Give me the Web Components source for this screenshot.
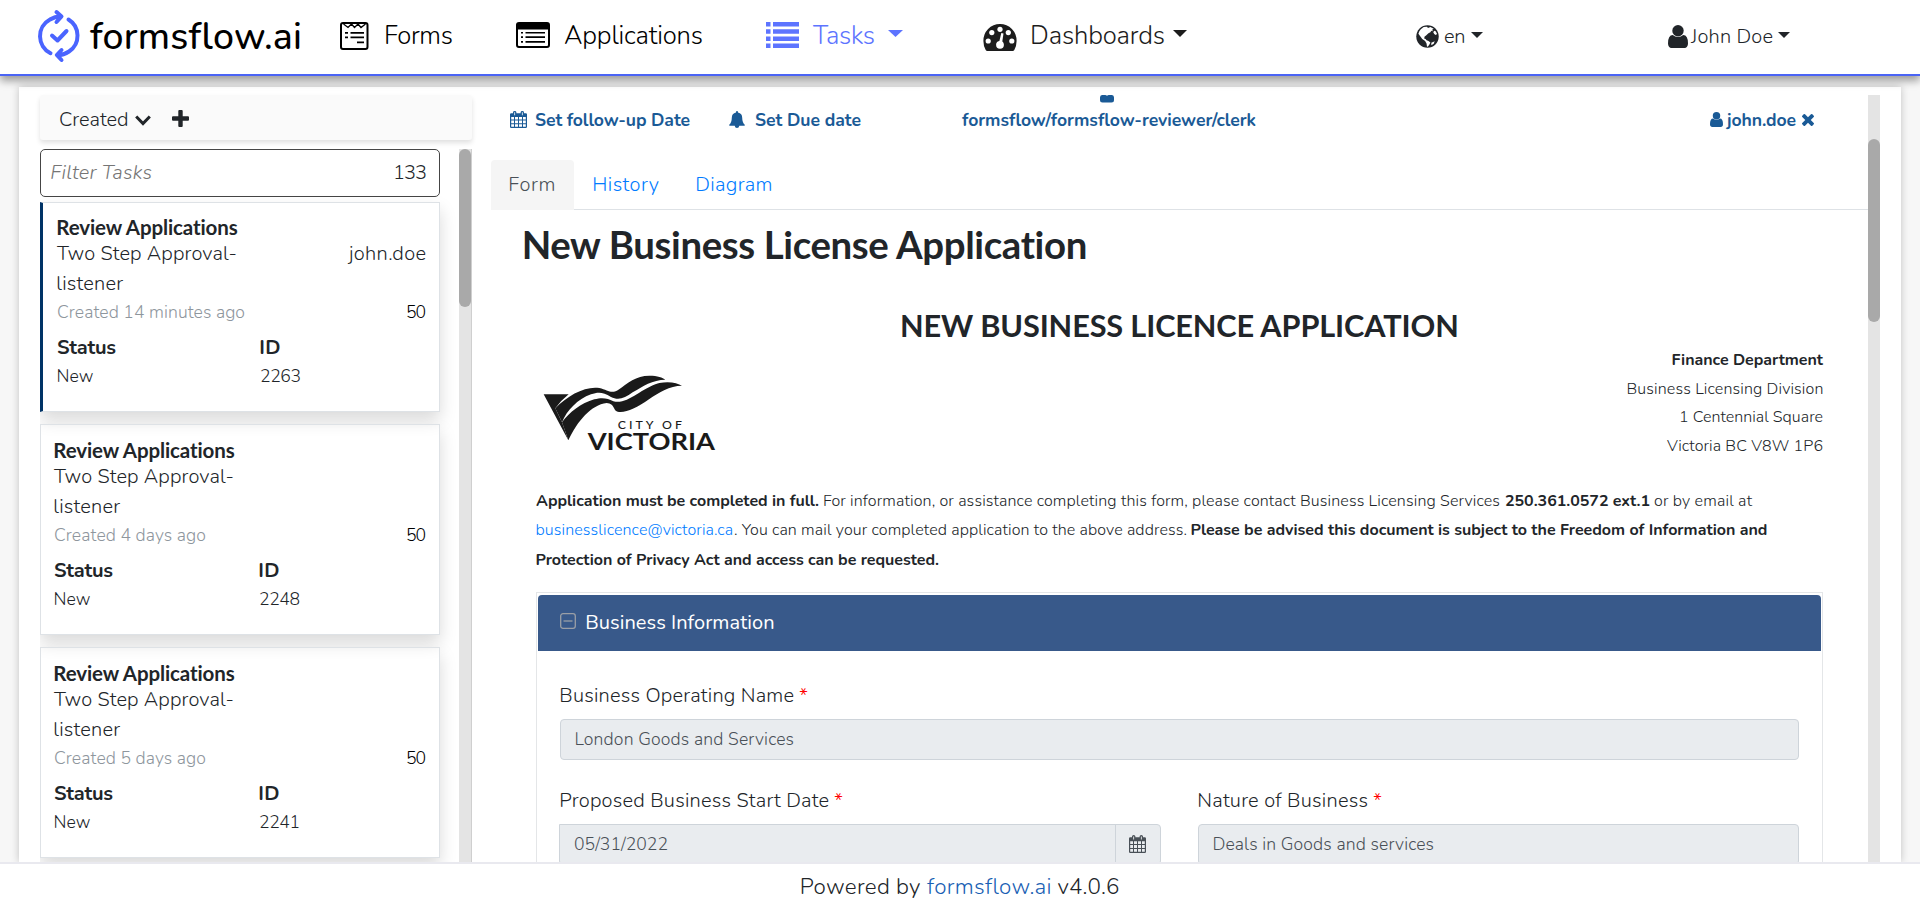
<!DOCTYPE html>
<html lang="en">
<head>
<meta charset="utf-8">
<title>formsflow.ai</title>
<style>
  html, body { margin: 0; height: 100%; overflow: hidden; }
  body { background: #f7f7f7; color: #212529; font-family: Nunito, Lato, "Open Sans", sans-serif; font-weight: 350; }
</style>
</head>
<body>
<ff-app></ff-app>
<script>
const define = (name, html, setup) => {
  const tpl = document.createElement('template');
  tpl.innerHTML = html.trim();
  customElements.define(name, class extends HTMLElement {
    connectedCallback() {
      if (this.shadowRoot) return;
      const root = this.attachShadow({ mode: 'open' });
      root.appendChild(tpl.content.cloneNode(true));
      if (setup) setup(this, root);
    }
  });
};

/* Single line of text whose ink spans a given width (w, in px); side bearings hang outside the box. */
define('ff-fit', `<style>:host { display: inline-block; white-space: nowrap; flex: none; vertical-align: top; } span { display: inline-block; white-space: pre; }</style><span><slot></slot></span>`, (el, root) => {
  const w = +el.getAttribute('w');
  const span = root.querySelector('span');
  const text = el.textContent;
  const size = parseFloat(getComputedStyle(el).fontSize);
  const first = text[0], last = text[text.length - 1];
  const lead = size * (/[BDEFHIKLMNPRbhiklmnpr]/.test(first) ? .035 : 0);
  const tail = size * (/[BDHIMNdhilmn]/.test(last) ? .025 : 0);
  el.style.width = w + 'px';
  span.style.marginLeft = -lead + 'px';
  span.style.letterSpacing = ((w + lead + tail - span.getBoundingClientRect().width) / (text.length - 1)) + 'px';
});

const ICONS = {
  logo: ['0 0 42 52', '<g fill="none" stroke="#4a64ff" stroke-width="4" stroke-linecap="round" stroke-linejoin="round"><path d="M12.5 43.2A19 19 0 0 1 12 9.5Q17 6.3 23 6.4M18.500 2L23.500 6.500L18.500 12M30.500 9.500A19 19 0 0 1 31 41.500Q25.500 45.300 19.500 45.200M23.500 40L18.800 45L23.500 50M14 25.500L19.500 30.500L28.500 21"/></g>'],
  form: ['0 0 29 28', '<rect x="1" y="1" width="26.500" height="26" rx="2" fill="none" stroke="currentColor" stroke-width="2"/><path d="M3.500 2l4.500 3.500L11.500 2l3 3.500L18 2l3 3.500L25.500 2" fill="none" stroke="currentColor" stroke-width="1.300"/><path d="M5 10h3v1.800H5zM10.500 10H24v1.800H10.500zM5 14.500h3v1.800H5zM10.500 14.500H24v1.800H10.500zM17 19.500h7v1.800h-7z" fill="currentColor"/>'],
  apps: ['0 0 34 26', '<path fill="currentColor" fill-rule="evenodd" d="M3 0h28a3 3 0 0 1 3 3v20a3 3 0 0 1-3 3H3a3 3 0 0 1-3-3V3a3 3 0 0 1 3-3zM2 7.500V23a1 1 0 0 0 1 1h28a1 1 0 0 0 1-1V7.500zM5 10h2v1.600H5zM9.500 10H29v1.600H9.500zM5 14.200h2v1.800H5zM9.500 14.200H29V16H9.500zM5 19h2v1.800H5zM9.500 19H29v1.800H9.500z"/>'],
  list: ['0 0 33 26', '<path fill="currentColor" d="M0 0h4.500v4.500H0zM7 0h26v4.500H7zM0 7.200h4.500v4.500H0zM7 7.200h26v4.500H7zM0 14.400h4.500v4.500H0zM7 14.400h26v4.500H7zM0 21.500h4.500V26H0zM7 21.500h26V26H7z"/>'],
  gauge: ['0 0 34 27', '<path fill="currentColor" d="M17 0a16.500 16.500 0 0 1 16.600 17q0 5-2.300 9-.6 1-1.600 1H4.300q-1 0-1.600-1Q.4 22 .4 17A16.500 16.500 0 0 1 17 0z"/><g fill="#fff"><circle cx="17" cy="5.300" r="2.600"/><circle cx="8.800" cy="8.600" r="2.600"/><circle cx="25.300" cy="8.600" r="2.600"/><circle cx="5.200" cy="17" r="2.600"/><circle cx="28.800" cy="17" r="2.600"/><circle cx="17" cy="20.800" r="3.900"/><path d="M15.700 20L18.300 9l2.200.4L18.900 20z"/></g>'],
  globe: ['0 0 24 24', '<circle cx="12" cy="12" r="11.700" fill="currentColor"/><path fill="#fff" d="M5 4.500L8 2.200l3.500-.4 1 1.200 2.500-.8 3.500 1.600-1.500 1 .5 1.700-1.500-.5-1 1.500-2 1-2.500 2.500-1.500 1-.5 2 1.500.5 1 1.500 2 .7 2 1.600-1 2-1.500 2.200-1 .2-.5-3.500-1.500-2.500L6.500 14.500 5 12.500 2.500 9l1-2.500zM19 6l1.500.5 1.500 3-1.500 1-1.500-1.200-1-1.800zM16 18.500l3.500-1.500-1 2.500-2.500 1.500z"/>'],
  user: ['0 0 20 23', '<path fill="currentColor" d="M20 18.600q0 2-1 3.200T16.600 23H3.400Q2 23 1 21.800T0 18.600q0-8.400 4.800-8.500Q7 12 10 12t5.200-1.900q4.800.1 4.800 8.500z"/><circle cx="10" cy="5.700" r="5.700" fill="currentColor"/>'],
  caret: ['0 0 14 7', '<path fill="currentColor" d="M0 0h14L7 7z"/>'],
  chevron: ['0 0 16 11', '<path fill="none" stroke="currentColor" stroke-width="3" d="M1.200 1.500L8 8.500l6.800-7"/>'],
  plus: ['0 0 17 17', '<path fill="currentColor" d="M6.300 1q0-1 1-1h2.400q1 0 1 1v5.300H16q1 0 1 1v2.400q0 1-1 1h-5.300V16q0 1-1 1H7.300q-1 0-1-1v-5.300H1q-1 0-1-1V7.300q0-1 1-1h5.300z"/>'],
  calendar: ['0 0 17 18', '<path fill="currentColor" fill-rule="evenodd" d="M1.300 2.300H3V1.500Q3 0 4.700 0t1.700 1.500v.8h4.200v-.8Q10.600 0 12.300 0T14 1.500v.8h1.700Q17 2.300 17 3.500v13.200q0 1.300-1.300 1.300H1.300Q0 18 0 16.700V3.500q0-1.200 1.300-1.200zM1.200 6.300V9H4V6.300zM5 6.300V9h3V6.300zM9 6.300V9h3V6.300zM13 6.300V9h2.800V6.300zM1.200 10v3H4v-3zM5 10v3h3v-3zM9 10v3h3v-3zM13 10v3h2.800v-3zM1.200 14v2.800H4V14zM5 14v2.800h3V14zM9 14v2.800h3V14zM13 14v2.800h2.800V14z"/><path d="M4.300 1.400h.8v3h-.8zM11.900 1.400h.8v3h-.8z" fill="#fff"/>'],
  bell: ['0 0 16 17', '<path fill="currentColor" d="M8 0q1 0 1 1v.6q4.200.8 4.200 5.200 0 5 2.800 7.200 0 .8-1 .8h-4.700Q10 17 8 17t-2.300-2.200H1q-1 0-1-.8 2.800-2.200 2.800-7.200 0-4.400 4.200-5.200V1q0-1 1-1z"/>'],
  times: ['302 366 1188 1188', '<path fill="currentColor" d="M1490 1322q0 40-28 68l-136 136q-28 28-68 28t-68-28l-294-294-294 294q-28 28-68 28t-68-28l-136-136q-28-28-28-68t28-68l294-294-294-294q-28-28-28-68t28-68l136-136q28-28 68-28t68 28l294 294 294-294q28-28 68-28t68 28l136 136q28 28 28 68t-28 68l-294 294 294 294q28 28 28 68z"/>'],
  group: ['0 0 14 8', '<path fill="currentColor" d="M0 2.500Q0 0 2 0h3.500q1.500 1 3 0H12q2 0 2 2.500V5q0 2.500-2.500 2.500h-9Q0 7.500 0 5z"/>'],
  minus: ['0 0 16 16', '<rect x=".7" y=".7" width="14.600" height="14.600" rx="2.300" fill="none" stroke="currentColor" stroke-width="1.300"/><path d="M3.500 8h9" stroke="currentColor" stroke-width="1.300"/>'],
  victoria: ['0 0 570 270', `<g fill="#1a1a1a"><path d="M23 76H98Q75 94 58 118L78 160L97 214z"/><path d="M58 118C95 78 150 50 190 57C215 63 225 75 245 64C275 42 300 20 340 20C365 20 380 25 388 32C350 32 320 52 290 70C265 90 245 94 225 84C200 68 185 70 165 76C125 90 92 125 78 160z"/><path d="M78 160C100 130 135 102 175 91C200 84 215 88 232 97C275 108 310 60 370 42C400 36 425 42 438 50C400 50 370 70 340 90C300 118 270 132 245 128C230 124 238 105 212 102C165 108 125 155 97 214z"/>
    <text x="245" y="180" font-family="Lato" font-weight="500" font-size="37" textLength="193">CITY OF</text><text x="155" y="243" font-family="Lato" font-weight="700" font-size="68" textLength="382" lengthAdjust="spacingAndGlyphs">VICTORIA</text></g>`],
};
define('ff-icon', `<style>:host { display: block; flex: none; } svg { display: block; width: 100%; height: 100%; overflow: visible; }</style><svg preserveAspectRatio="none"></svg>`, (el, root) => {
  const [box, body] = ICONS[el.getAttribute('name')];
  const svg = root.querySelector('svg');
  svg.setAttribute('viewBox', box);
  svg.innerHTML = body;
  el.style.width = el.getAttribute('w') + 'px';
  el.style.height = el.getAttribute('h') + 'px';
});

define('ff-navbar', `
  <style>
    :host { display: flex; align-items: flex-start; box-sizing: border-box; height: 76px; padding-left: 38px; background: #fff;
      border-bottom: 2px solid #4a64f5; box-shadow: 0 5px 8px rgba(0,0,0,.36); position: relative; z-index: 1;
      font-size: 25.600px; line-height: 30px; color: #000; }
    .item { display: flex; align-items: flex-start; }
    .brand { font-size: 37.500px; line-height: 40px; font-weight: 540; }
    .small { font-size: 20px; color: #212529; }
  </style>
  <div class="item"><ff-icon name="logo" w="42" h="52" style="margin-top:10px"></ff-icon><ff-fit class="brand" w="211" style="margin:17px 0 0 10px">formsflow.ai</ff-fit></div>
  <div class="item" style="margin-left:39px"><ff-icon name="form" w="29" h="28" style="margin-top:22px"></ff-icon><ff-fit w="68" style="margin:21px 0 0 16px">Forms</ff-fit></div>
  <div class="item" style="margin-left:63px"><ff-icon name="apps" w="34" h="26" style="margin-top:22px"></ff-icon><ff-fit w="139" style="margin:21px 0 0 14px">Applications</ff-fit></div>
  <div class="item" style="margin-left:63px;color:#5d74ff"><ff-icon name="list" w="33" h="26" style="margin-top:22px"></ff-icon><ff-fit w="62" style="margin:21px 0 0 14px">Tasks</ff-fit><ff-icon name="caret" w="15" h="7" style="margin:30px 0 0 13px"></ff-icon></div>
  <div class="item" style="margin-left:80px;color:#1c1c1c"><ff-icon name="gauge" w="34" h="27" style="margin-top:24px"></ff-icon><ff-fit w="134" style="margin:21px 0 0 14px">Dashboards</ff-fit><ff-icon name="caret" w="14" h="7" style="margin:30px 0 0 8px"></ff-icon></div>
  <div class="item small" style="margin-left:229px"><ff-icon name="globe" w="23" h="23" style="margin-top:25px"></ff-icon><ff-fit w="21" style="margin:22px 0 0 5px">en</ff-fit><ff-icon name="caret" w="12" h="6" style="margin:32px 0 0 6px"></ff-icon></div>
  <div class="item small" style="margin-left:185px"><ff-icon name="user" w="20" h="23" style="margin-top:25px"></ff-icon><ff-fit w="82" style="margin:22px 0 0 3px">John Doe</ff-fit><ff-icon name="caret" w="12" h="6" style="margin:32px 0 0 5px"></ff-icon></div>`);

define('ff-task-card', `
  <style>
    :host { display: block; box-sizing: border-box; width: 400px; height: 211px; margin-bottom: 12px; padding: 13px 13px 0 13px;
      border: 1px solid #dee2e6; box-shadow: 0 8px 16px rgba(0,0,0,.15); font-size: 20px; }
    :host([selected]) { border-left: 3px solid #036; height: 210px; padding-top: 12px; padding-left: 14px; }
    .title { font-family: Lato, sans-serif; font-size: 20.500px; font-weight: 700; line-height: 24px; height: 24px; }
    .row { display: flex; justify-content: space-between; }
    .proc { line-height: 30px; height: 59px; }
    .meta { line-height: 28px; font-size: 17.600px; color: #000; }
    .meta .age { color: #8e969d; }
    .grid { display: grid; grid-template-columns: 205px 1fr; line-height: 28px; font-size: 17.600px; margin-top: 8px; }
    :host([selected]) .grid { grid-template-columns: 203px 1fr; }
    b { font-size: 20px; font-weight: 700; }
  </style>
  <div class="title"><ff-fit w="181">Review Applications</ff-fit></div>
  <div class="row proc"><div><ff-fit w="180">Two Step Approval-</ff-fit><br><ff-fit w="66">listener</ff-fit></div><div class="who"></div></div>
  <div class="row meta"><span class="age"></span><ff-fit w="20">50</ff-fit></div>
  <div class="grid"><b><ff-fit w="59">Status</ff-fit></b><b><ff-fit w="20">ID</ff-fit></b><ff-fit w="36.500">New</ff-fit><span class="id"></span></div>`, (el, root) => {
  const put = (sel, text, w) => { root.querySelector(sel).innerHTML = `<ff-fit w="${w}">${text}</ff-fit>`; };
  if (el.getAttribute('assignee')) put('.who', el.getAttribute('assignee'), 77);
  put('.age', el.getAttribute('age'), el.getAttribute('age-w'));
  put('.id', el.getAttribute('task-id'), 41);
});

define('ff-task-list', `
  <style>
    :host { display: flex; flex-direction: column; width: 432px; padding-top: 8px; font-size: 20px; }
    .head { display: flex; align-items: flex-start; height: 45px; background: #fafafa; border-radius: 3px; box-shadow: 0 3px 5px rgba(0,0,0,.12); padding-left: 19px; line-height: 28px; flex: none; }
    .body { display: flex; margin-top: 9px; flex: 1; min-height: 0; overflow: hidden; }
    .cards { width: 419px; overflow: hidden; }
    .filter { display: flex; justify-content: space-between; box-sizing: border-box; width: 400px; height: 48px; border: 1px solid #454545; border-radius: 5px; padding: 0 12px 0 10px; line-height: 45px; margin-bottom: 5px; }
    i { color: #757575; }
    .bar { width: 12px; background: #e4e4e4; border-right: 1px solid #cfcfcf; }
    .thumb { height: 158px; border-radius: 6px; background: #a9a9a9; }
  </style>
  <div class="head"><ff-fit w="69" style="margin-top:11px">Created</ff-fit><ff-icon name="chevron" w="16" h="11" style="margin:20px 0 0 7px"></ff-icon><ff-icon name="plus" w="17" h="17" style="margin:15px 0 0 21px"></ff-icon></div>
  <div class="body">
    <div class="cards">
      <div class="filter"><i><ff-fit w="101">Filter Tasks</ff-fit></i><ff-fit w="34">133</ff-fit></div>
      <ff-task-card selected assignee="john.doe" age="Created 14 minutes ago" age-w="188" task-id="2263"></ff-task-card>
      <ff-task-card age="Created 4 days ago" age-w="152" task-id="2248"></ff-task-card>
      <ff-task-card age="Created 5 days ago" age-w="152" task-id="2241"></ff-task-card>
    </div>
    <div class="bar"><div class="thumb"></div></div>
  </div>`);

define('ff-label', `
  <style>:host { display: flex; line-height: 29px; height: 28px; font-size: 20px; margin-bottom: 10px; } em { color: #f00; font-style: normal; margin-left: 5px; }</style>
  <slot></slot><em>*</em>`);

define('ff-input', `
  <style>
    :host { display: flex; box-sizing: border-box; height: 41px; border: 1px solid #ced4da; border-radius: 4px; background: #e9ecef; color: #495057; font-size: 17.600px; line-height: 39px; padding-left: 14px; }
    .pad { flex: 1; }
    .addon { display: none; width: 44px; border-left: 1px solid #ced4da; }
    :host([date]) { border-top-left-radius: 0; }
    :host([date]) .addon { display: block; }
  </style>
  <slot></slot><div class="pad"></div><div class="addon"><ff-icon name="calendar" w="17" h="18" style="margin:10px 0 0 13px"></ff-icon></div>`);

define('ff-panel', `
  <style>
    :host { display: block; border: 1px solid #e4e6e8; padding: 2px 1px 0; height: 400px; }
    .head { display: flex; align-items: flex-start; height: 56px; background: #38598a; border-radius: 4px 4px 0 0; color: #fff; font-size: 20px; font-weight: 450; line-height: 55px; padding-left: 22px; }
    .body { padding: 30px 22px 0; }
  </style>
  <div class="head"><ff-icon name="minus" w="16" h="16" style="margin-top:18px;color:#9a9fa6"></ff-icon><ff-fit w="188" style="margin-left:10px">Business Information</ff-fit></div>
  <div class="body"><slot></slot></div>`);

define('ff-task-detail', `
  <style>
    :host { display: flex; width: 1389px; padding-top: 8px; }
    .main { width: 1377px; overflow: hidden; }
    .bar { width: 12px; background: #e4e4e4; padding-top: 44px; box-sizing: border-box; }
    .thumb { height: 183px; border-radius: 6px; background: #a9a9a9; }
    .tools { display: flex; align-items: flex-start; height: 65px; color: #1a5a96; font-size: 17.600px; font-weight: 700; line-height: 24px; padding-left: 19px; }
    .tools > ff-fit { margin-top: 13px; }
    .groups { display: flex; flex-direction: column; align-items: center; width: 294px; margin-left: 101px; }
    .tabs { display: flex; height: 49px; border-bottom: 1px solid #dee2e6; color: #007bff; font-size: 20px; line-height: 49px; }
    .tabs .on { width: 65px; height: 50px; padding-left: 18px; background: #f5f5f5; color: #495057; border-radius: 4px 4px 0 0; }
    h1 { margin: 11px 0 0 32px; font-size: 38.400px; line-height: 46px; font-weight: 700; font-family: Lato, sans-serif; }
    h2 { margin: 41px 0 0 410px; font-size: 30.700px; line-height: 36px; font-weight: 700; font-family: Lato, sans-serif; }
    .top { display: flex; justify-content: space-between; margin: 2px 45px 0; height: 115px; font-size: 16px; line-height: 28.700px; }
    .addr { display: flex; flex-direction: column; align-items: flex-end; }
    .text { margin: 26px 0 0 45px; font-size: 16px; line-height: 29.400px; height: 88px; }
    .text div { display: flex; }
    .text a { color: #007bff; }
    b { font-weight: 700; }
    ff-panel { margin: 17px 45px 0; }
    .cols { display: grid; grid-template-columns: 602px 601px; column-gap: 36px; margin: 26px 0 0 -1px; }
    .cols > div:first-child ff-label { margin-left: 1px; }
    .cols > div:last-child { margin-left: 1px; margin-right: -1px; }
  </style>
  <div class="main">
    <div class="tools">
      <ff-icon name="calendar" w="17" h="17" style="margin-top:16px"></ff-icon><ff-fit w="155" style="margin-left:8px">Set follow-up Date</ff-fit>
      <ff-icon name="bell" w="16" h="17" style="margin:16px 0 0 39px"></ff-icon><ff-fit w="106" style="margin-left:10px">Set Due date</ff-fit>
      <div class="groups"><ff-icon name="group" w="14" h="8" style="margin-right:4px"></ff-icon><ff-fit w="294" style="margin-top:5px">formsflow/formsflow-reviewer/clerk</ff-fit></div>
      <ff-icon name="user" w="13" h="15" style="margin:17px 0 0 454px"></ff-icon><ff-fit w="69" style="margin-left:4px">john.doe</ff-fit><ff-icon name="times" w="12" h="12" style="margin:19px 0 0 6px"></ff-icon>
    </div>
    <div class="tabs"><div class="on"><ff-fit w="46">Form</ff-fit></div><ff-fit w="66" style="margin-left:19px">History</ff-fit><ff-fit w="76" style="margin-left:37px">Diagram</ff-fit></div>
    <h1><ff-fit w="564">New Business License Application</ff-fit></h1>
    <h2><ff-fit w="557">NEW BUSINESS LICENCE APPLICATION</ff-fit></h2>
    <div class="top">
      <ff-icon name="victoria" w="190" h="90" style="margin-top:23px"></ff-icon>
      <div class="addr"><b><ff-fit w="151">Finance Department</ff-fit></b><ff-fit w="196">Business Licensing Division</ff-fit><ff-fit w="144">1 Centennial Square</ff-fit><ff-fit w="156">Victoria BC V8W 1P6</ff-fit></div>
    </div>
    <div class="text">
      <div><b><ff-fit w="283">Application must be completed in full.</ff-fit></b><ff-fit w="676.500" style="margin-left:4.500px">For information, or assistance completing this form, please contact Business Licensing Services</ff-fit><b><ff-fit w="145" style="margin-left:5px">250.361.0572 ext.1</ff-fit></b><ff-fit w="98" style="margin-left:4px">or by email at</ff-fit></div>
      <div><a><ff-fit w="197">businesslicence@victoria.ca</ff-fit></a><ff-fit w="453" style="margin-left:1px">. You can mail your completed application to the above address.</ff-fit><b><ff-fit w="576" style="margin-left:4px">Please be advised this document is subject to the Freedom of Information and</ff-fit></b></div>
      <div><b><ff-fit w="403">Protection of Privacy Act and access can be requested.</ff-fit></b></div>
    </div>
    <ff-panel>
      <ff-label><ff-fit w="234">Business Operating Name</ff-fit></ff-label>
      <ff-input><ff-fit w="219">London Goods and Services</ff-fit></ff-input>
      <div class="cols">
        <div><ff-label><ff-fit w="269">Proposed Business Start Date</ff-fit></ff-label><ff-input date><ff-fit w="94">05/31/2022</ff-fit></ff-input></div>
        <div><ff-label><ff-fit w="170">Nature of Business</ff-fit></ff-label><ff-input><ff-fit w="221">Deals in Goods and services</ff-fit></ff-input></div>
      </div>
    </ff-panel>
  </div>
  <div class="bar"><div class="thumb"></div></div>`);

define('ff-footer', `
  <style>
    :host { display: flex; justify-content: center; align-items: flex-start; box-sizing: border-box; height: 36px; padding-top: 12px; background: #fff; border-top: 2px solid #e9e9ef; font-size: 22.400px; line-height: 22px; overflow: hidden; flex: none; position: relative; }
    a { color: #1a5fb4; }
  </style>
  <ff-fit w="120">Powered by</ff-fit><a><ff-fit w="124" style="margin:0 6.500px">formsflow.ai</ff-fit></a><ff-fit w="62">v4.0.6</ff-fit>`);

define('ff-app', `
  <style>
    :host { display: flex; flex-direction: column; height: 898px; width: 1920px; overflow: hidden; }
    ff-navbar, ff-footer { flex: none; }
    main { display: flex; flex: 1; min-height: 0; margin: 11px 19px 0; padding: 0 21px; background: #fff; box-shadow: 0 0 8px rgba(0,0,0,.22); }
    ff-task-detail { margin-left: 19px; }
  </style>
  <ff-navbar></ff-navbar>
  <main><ff-task-list></ff-task-list><ff-task-detail></ff-task-detail></main>
  <ff-footer></ff-footer>`);
</script>
</body>
</html>
